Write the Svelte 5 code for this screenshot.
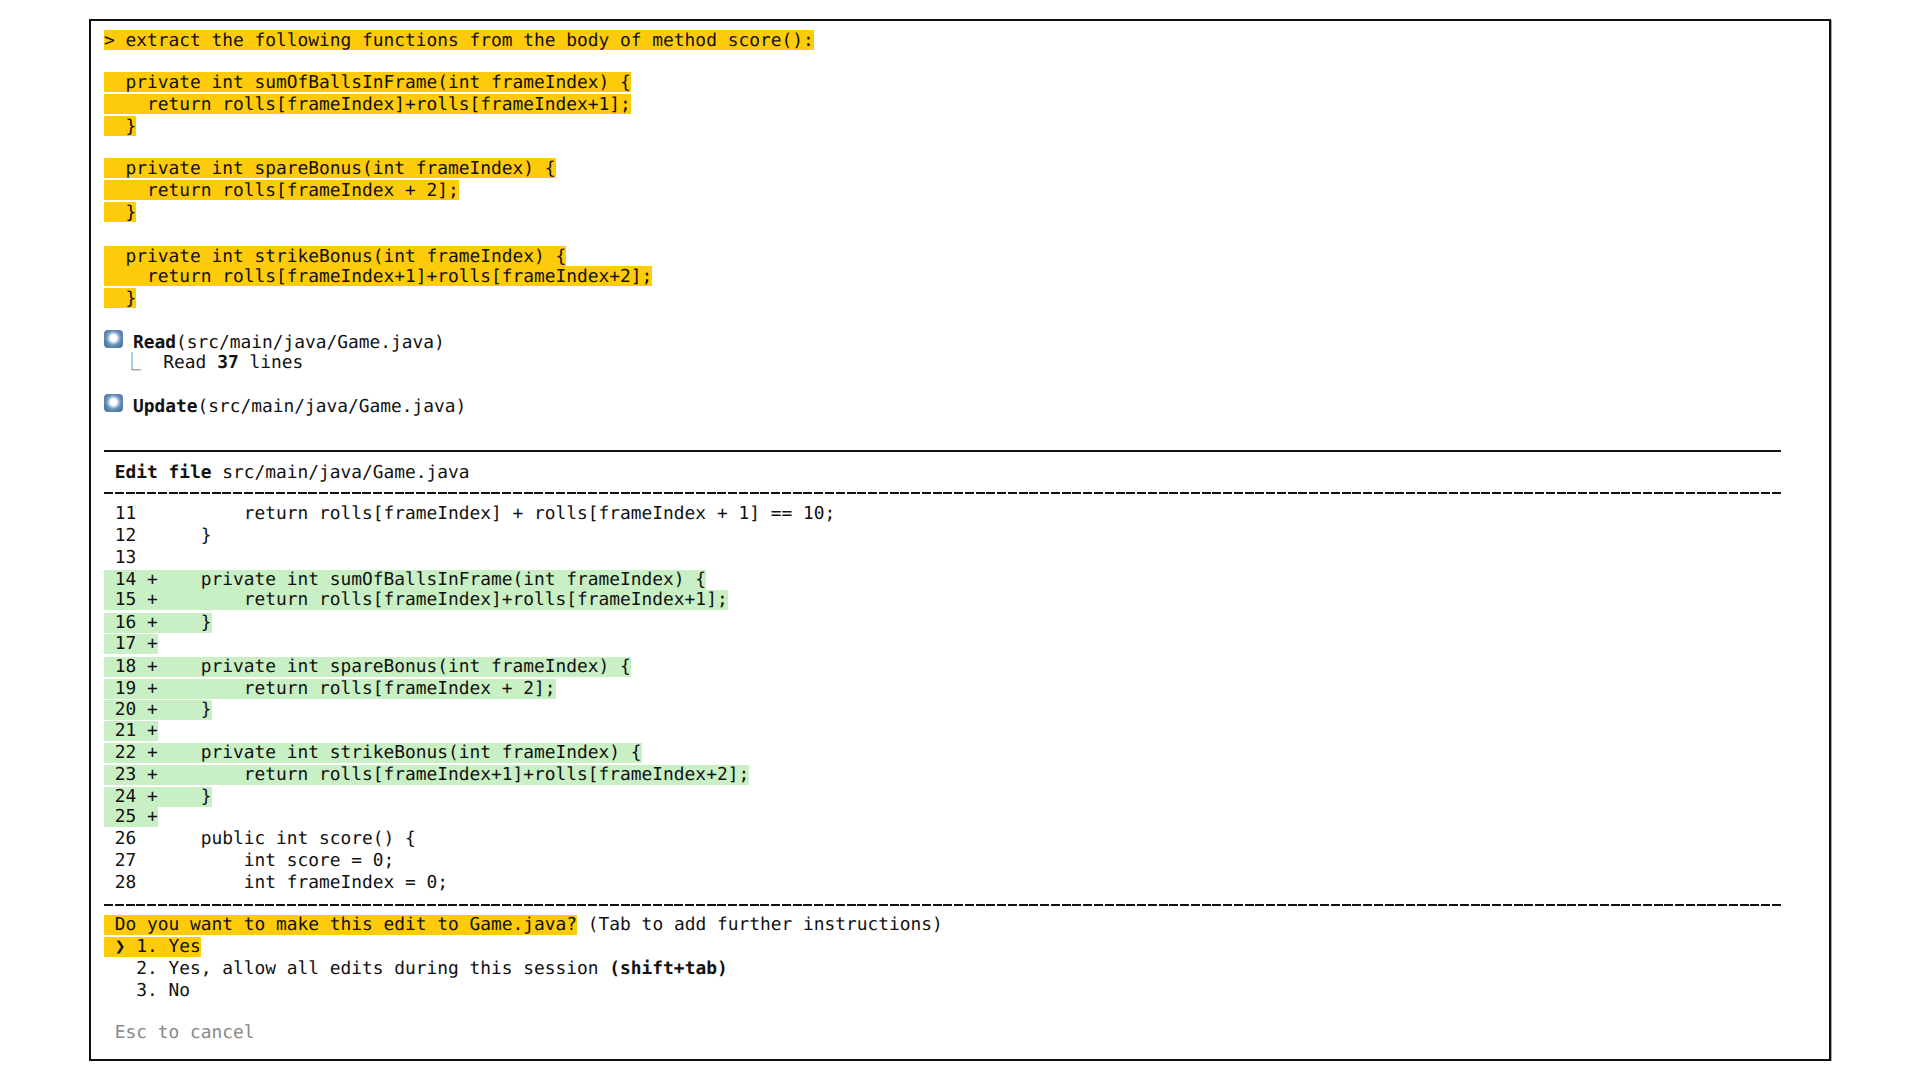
<script>
    // gap = margin above the row, the pitch of the reference is not quite even
    const diffRows = [
        { num: "11", text: "        return rolls[frameIndex] + rolls[frameIndex + 1] == 10;", gap: 0 },
        { num: "12", text: "    }", gap: 2 },
        { num: "13", text: "", gap: 2 },
        { num: "14", plus: true, text: "    private int sumOfBallsInFrame(int frameIndex) {", gap: 2 },
        { num: "15", plus: true, text: "        return rolls[frameIndex]+rolls[frameIndex+1];", gap: 0 },
        { num: "16", plus: true, text: "    }", gap: 3 },
        { num: "17", plus: true, text: "", gap: 1 },
        { num: "18", plus: true, text: "    private int spareBonus(int frameIndex) {", gap: 3 },
        { num: "19", plus: true, text: "        return rolls[frameIndex + 2];", gap: 2 },
        { num: "20", plus: true, text: "    }", gap: 1 },
        { num: "21", plus: true, text: "", gap: 1 },
        { num: "22", plus: true, text: "    private int strikeBonus(int frameIndex) {", gap: 2 },
        { num: "23", plus: true, text: "        return rolls[frameIndex+1]+rolls[frameIndex+2];", gap: 2 },
        { num: "24", plus: true, text: "    }", gap: 2 },
        { num: "25", plus: true, text: "", gap: 0 },
        { num: "26", text: "    public int score() {", gap: 2 },
        { num: "27", text: "        int score = 0;", gap: 2 },
        { num: "28", text: "        int frameIndex = 0;", gap: 2 }
    ];

    function diffLine(row) {
        return " " + row.num + (row.plus ? " +" : "  ") + row.text;
    }
</script>

<div class="terminal">
    <section class="prompt">
        <div class="ln"><span class="hl">&gt; extract the following functions from the body of method score():</span></div>

        <div class="ln block"><span class="hl">{"  private int sumOfBallsInFrame(int frameIndex) {"}</span></div>
        <div class="ln next"><span class="hl">{"    return rolls[frameIndex]+rolls[frameIndex+1];"}</span></div>
        <div class="ln next"><span class="hl">{"  }"}</span></div>

        <div class="ln block"><span class="hl">{"  private int spareBonus(int frameIndex) {"}</span></div>
        <div class="ln next"><span class="hl">{"    return rolls[frameIndex + 2];"}</span></div>
        <div class="ln next"><span class="hl">{"  }"}</span></div>

        <div class="ln block wide"><span class="hl">{"  private int strikeBonus(int frameIndex) {"}</span></div>
        <div class="ln"><span class="hl">{"    return rolls[frameIndex+1]+rolls[frameIndex+2];"}</span></div>
        <div class="ln next"><span class="hl">{"  }"}</span></div>
    </section>

    <section class="tools">
        <div class="tool">
            <span class="dot"></span>
            <div class="ln"><b>Read</b>(src/main/java/Game.java)</div>
        </div>
        <div class="ln result"><span class="elbow">⎿</span>{"  Read "}<b>37</b> lines</div>
        <div class="tool update">
            <span class="dot"></span>
            <div class="ln"><b>Update</b>(src/main/java/Game.java)</div>
        </div>
    </section>

    <section class="edit">
        <div class="rule"></div>
        <div class="ln title">{" "}<b>Edit file</b> src/main/java/Game.java</div>
        <div class="dashes"></div>
        <div class="diff">
            {#each diffRows as row}
                <div class="ln" style="margin-top: {row.gap}px"><span class={row.plus ? "added" : ""}>{diffLine(row)}</span></div>
            {/each}
        </div>
        <div class="dashes lower"></div>
    </section>

    <section class="ask">
        <div class="ln"><span class="hl">{" Do you want to make this edit to Game.java?"}</span> (Tab to add further instructions)</div>
        <div class="ln next"><span class="hl">{" ❯ 1. Yes"}</span></div>
        <div class="ln next">{"   2. Yes, allow all edits during this session "}<b>(shift+tab)</b></div>
        <div class="ln next">{"   3. No"}</div>
        <div class="ln cancel">{" Esc to cancel"}</div>
    </section>
</div>

<style>
    :global(body) {
        margin: 0;
        background: #fff;
    }

    .terminal {
        box-sizing: border-box;
        width: 1742px;
        height: 1042px;
        margin: 19px 0 0 89px;
        padding: 9px 0 0 13px;
        border: 2px solid #111;
        box-shadow: 1px 1px 0 #aaa;
        color: #111;
        font-family: "DejaVu Sans Mono", monospace;
        font-size: 17.86px;
        text-rendering: geometricPrecision;
    }

    .ln {
        height: 20px;
        line-height: 21px;
        white-space: pre;
    }

    .diff .ln,
    .ask .ln {
        line-height: 20px;
    }

    .hl {
        display: inline-block;
        height: 20px;
        background: #fdcb0a;
    }

    .added {
        display: inline-block;
        height: 20px;
        background: #c9efc4;
    }

    .block {
        margin-top: 22px;
    }

    .block.wide {
        margin-top: 24px;
    }

    .next {
        margin-top: 2px;
    }

    .tools {
        margin-top: 24px;
    }

    .tool {
        display: flex;
        gap: 10px;
    }

    .tool.update {
        margin-top: 24px;
    }

    .dot {
        width: 19px;
        height: 18px;
        margin-top: -2px;
        border-radius: 4px;
        background: radial-gradient(circle at 50% 45%, #fff 0 3px, #dce6ef 4px, #7a9fc1 6.5px, #5883ac 8.5px, #43709b 100%);
    }

    .result {
        padding-left: 19px;
    }

    .elbow {
        margin-right: 1px;
        color: #666;
    }

    .edit {
        margin-top: 34px;
    }

    .rule {
        width: 1677px;
        height: 2px;
        background: #111;
    }

    .title {
        margin-top: 10px;
    }

    .dashes {
        width: 1677px;
        height: 2px;
        margin-top: 10px;
        background: repeating-linear-gradient(90deg, #111 0 9px, transparent 9px 10.761px);
    }

    .diff {
        margin-top: 10px;
    }

    .dashes.lower {
        margin-top: 11px;
    }

    .ask {
        margin-top: 9px;
    }

    .cancel {
        margin-top: 22px;
        color: #888;
    }
</style>
